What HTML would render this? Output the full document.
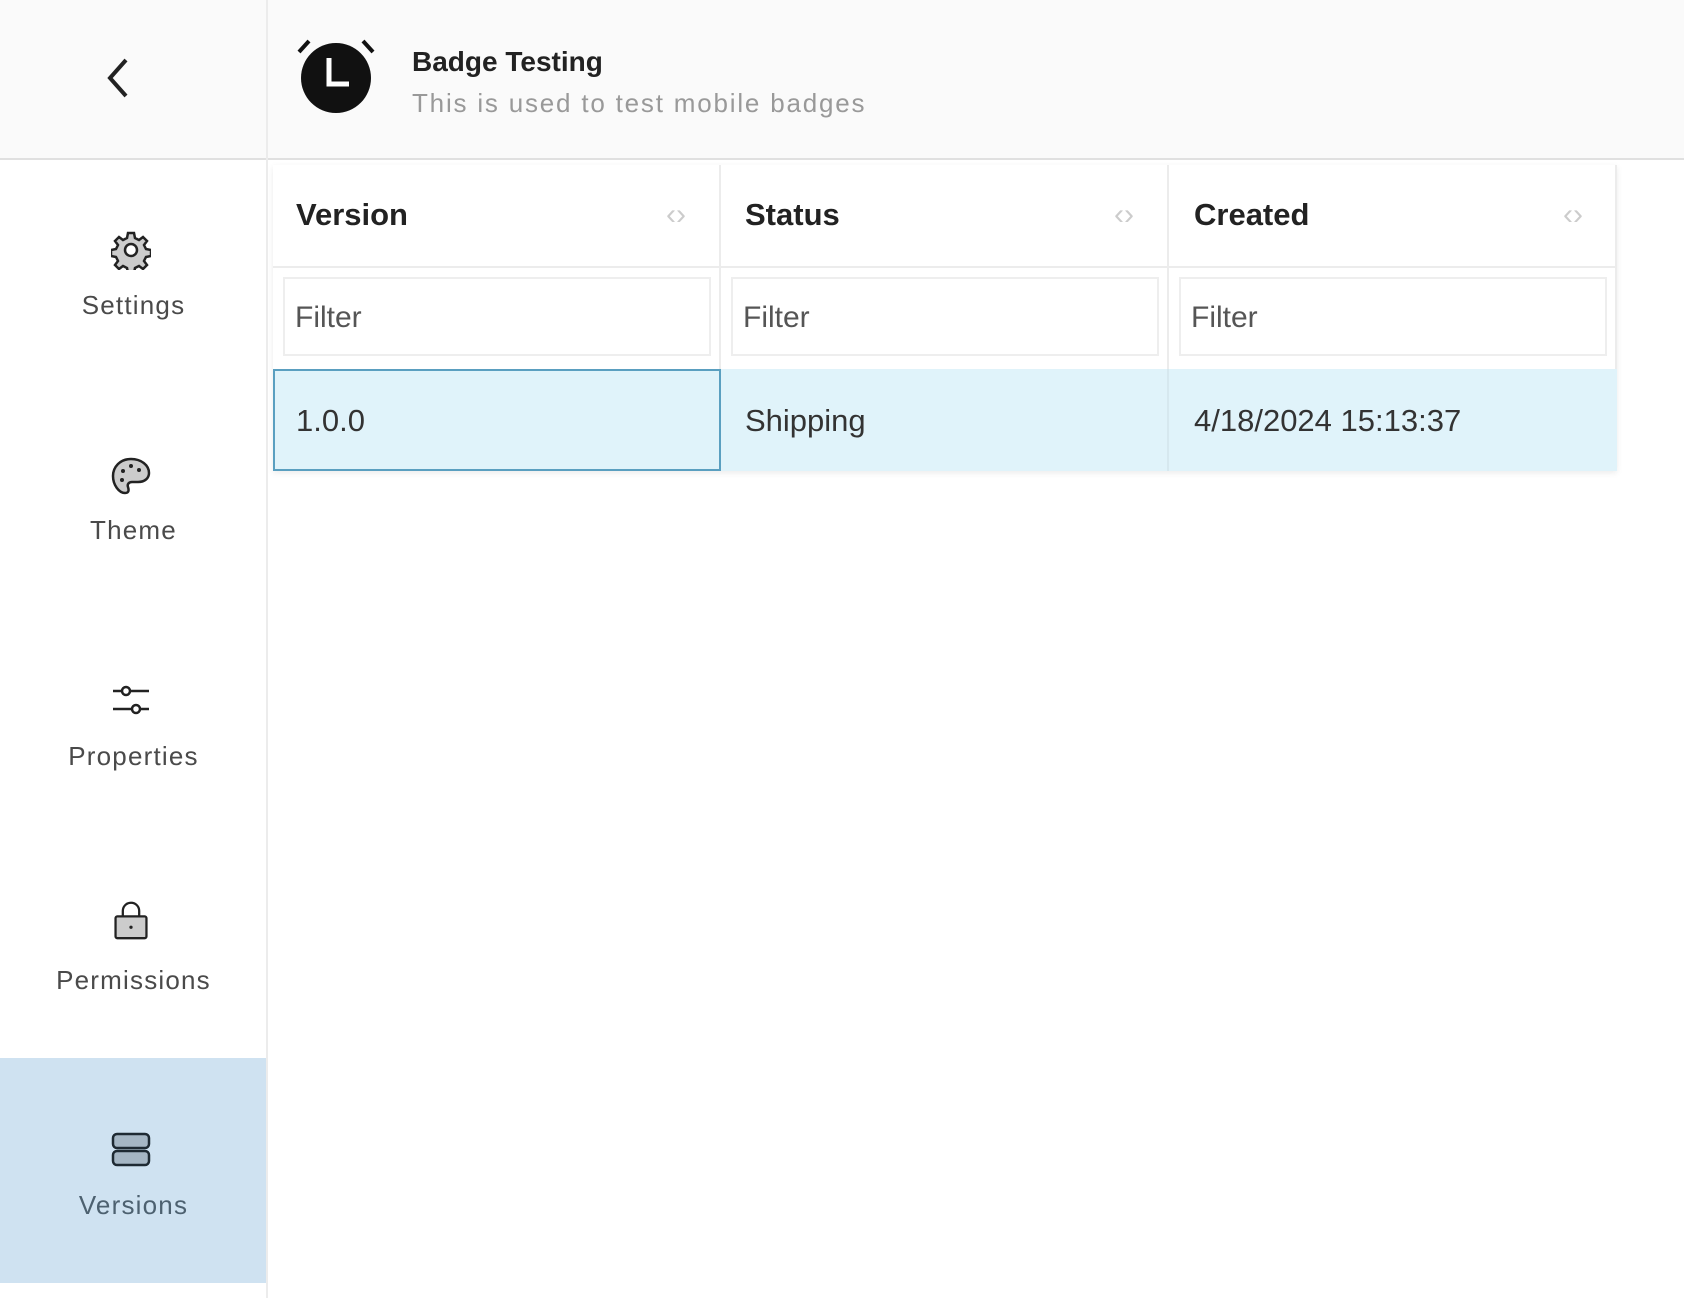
<!DOCTYPE html>
<html><head><meta charset="utf-8"><style>
*{margin:0;padding:0;box-sizing:border-box}
body{width:1684px;height:1298px;background:#fff;font-family:"Liberation Sans",sans-serif;position:relative;overflow:hidden;color:#222}
.abs{position:absolute}
.side-lbl{position:absolute;left:0;width:267px;text-align:center;font-size:26px;color:#4a4a4a;letter-spacing:1.2px}
.ico{position:absolute;left:111px;width:40px;height:40px}
.hd{position:absolute;top:197px;font-size:31px;color:#222;font-weight:bold}
.arr{position:absolute;top:198px;font-size:30px;color:#ccc;letter-spacing:0px}
.flt{position:absolute;top:277px;height:79px;border:2px solid #eee;background:#fff}
.flt span{position:absolute;left:10px;top:22px;font-size:30px;color:#555}
.cell{position:absolute;top:403px;font-size:31px;color:#333}
</style></head><body>
<div class="abs" style="left:0;top:0;width:1684px;height:160px;background:#fafafa;border-bottom:2px solid #e0e0e0"></div>
<div class="abs" style="left:266px;top:0;width:2px;height:1298px;background:#ececec"></div>
<svg class="abs" style="left:100px;top:56px" width="36" height="44" viewBox="0 0 36 44"><path d="M26 4 L10 22 L26 40" fill="none" stroke="#222" stroke-width="4"/></svg>
<svg class="abs" style="left:295px;top:36px" width="82" height="80" viewBox="0 0 82 80">
<circle cx="41" cy="42" r="35" fill="#111"/>
<path d="M34 22 V48 H54" fill="none" stroke="#fff" stroke-width="5"/>
<path d="M4 16 L14 5" stroke="#111" stroke-width="4"/><path d="M78 16 L68 5" stroke="#111" stroke-width="4"/>
</svg>
<div class="abs" style="left:412px;top:46px;font-size:28px;font-weight:bold;color:#222">Badge Testing</div>
<div class="abs" style="left:412px;top:88px;font-size:26px;color:#999;letter-spacing:1.8px">This is used to test mobile badges</div>

<svg class="ico" style="top:230px" viewBox="0 0 40 40"><path fill="#ccc" stroke="#222" stroke-width="2.5" d="M17 3h6l1 5 4 2 4-3 4 4-3 4 2 4 5 1v6l-5 1-2 4 3 4-4 4-4-3-4 2-1 5h-6l-1-5-4-2-4 3-4-4 3-4-2-4-5-1v-6l5-1 2-4-3-4 4-4 4 3 4-2z"/><circle cx="20" cy="20" r="6" fill="#fff" stroke="#222" stroke-width="2.5"/></svg>
<div class="side-lbl" style="top:290px">Settings</div>
<svg class="ico" style="top:456px" viewBox="0 0 40 40"><path fill="#ccc" stroke="#222" stroke-width="2.5" d="M20 3C9 3 2 11 2 20c0 9 6 17 12 17 4 0 4-3 3-6-1-3 1-5 4-5h6c7 0 11-4 11-9C38 9 30 3 20 3z"/><circle cx="12" cy="15" r="2" fill="#222"/><circle cx="20" cy="10" r="2" fill="#222"/><circle cx="28" cy="14" r="2" fill="#222"/><circle cx="11" cy="24" r="2" fill="#222"/></svg>
<div class="side-lbl" style="top:515px">Theme</div>
<svg class="ico" style="top:682px" viewBox="0 0 40 40"><path d="M2 9H38M2 27H38" stroke="#222" stroke-width="2.5"/><circle cx="15" cy="9" r="4" fill="#fff" stroke="#222" stroke-width="2.5"/><circle cx="25" cy="27" r="4" fill="#fff" stroke="#222" stroke-width="2.5"/></svg>
<div class="side-lbl" style="top:741px">Properties</div>
<svg class="ico" style="top:900px" viewBox="0 0 40 44"><path d="M11 18V12a9 9 0 0 1 18 0v6" fill="none" stroke="#222" stroke-width="2.5"/><rect x="3" y="18" width="34" height="24" rx="2" fill="#ccc" stroke="#222" stroke-width="2.5"/><circle cx="20" cy="30" r="1.8" fill="#222"/></svg>
<div class="side-lbl" style="top:965px">Permissions</div>
<div class="abs" style="left:0;top:1058px;width:266px;height:225px;background:#cfe2f1"></div>
<svg class="ico" style="top:1131px" viewBox="0 0 40 40"><rect x="2" y="3" width="36" height="14" rx="4" fill="#a5b6c4" stroke="#1e2a33" stroke-width="2.5"/><rect x="2" y="20" width="36" height="14" rx="4" fill="#a5b6c4" stroke="#1e2a33" stroke-width="2.5"/></svg>
<div class="side-lbl" style="top:1190px;color:#4d6170">Versions</div>

<div class="abs" style="left:273px;top:165px;width:1344px;height:306px;box-shadow:0 2px 6px rgba(0,0,0,0.08)"></div>
<div class="abs" style="left:273px;top:266px;width:1344px;height:2px;background:#ececec"></div>
<div class="abs" style="left:719px;top:165px;width:2px;height:306px;background:#ececec"></div>
<div class="abs" style="left:1167px;top:165px;width:2px;height:306px;background:#ececec"></div>
<div class="abs" style="left:1615px;top:165px;width:2px;height:306px;background:#ececec"></div>
<div class="hd" style="left:296px">Version</div><div class="arr" style="left:666px">‹›</div>
<div class="hd" style="left:745px">Status</div><div class="arr" style="left:1114px">‹›</div>
<div class="hd" style="left:1194px">Created</div><div class="arr" style="left:1563px">‹›</div>
<div class="flt" style="left:283px;width:428px"><span>Filter</span></div>
<div class="flt" style="left:731px;width:428px"><span>Filter</span></div>
<div class="flt" style="left:1179px;width:428px"><span>Filter</span></div>
<div class="abs" style="left:273px;top:369px;width:1344px;height:102px;background:#e0f3fa"></div>
<div class="abs" style="left:1167px;top:369px;width:2px;height:102px;background:#d6e8ef"></div>
<div class="abs" style="left:273px;top:369px;width:448px;height:102px;border:2px solid #5a9fc0"></div>
<div class="cell" style="left:296px">1.0.0</div>
<div class="cell" style="left:745px">Shipping</div>
<div class="cell" style="left:1194px">4/18/2024 15:13:37</div>
</body></html>
